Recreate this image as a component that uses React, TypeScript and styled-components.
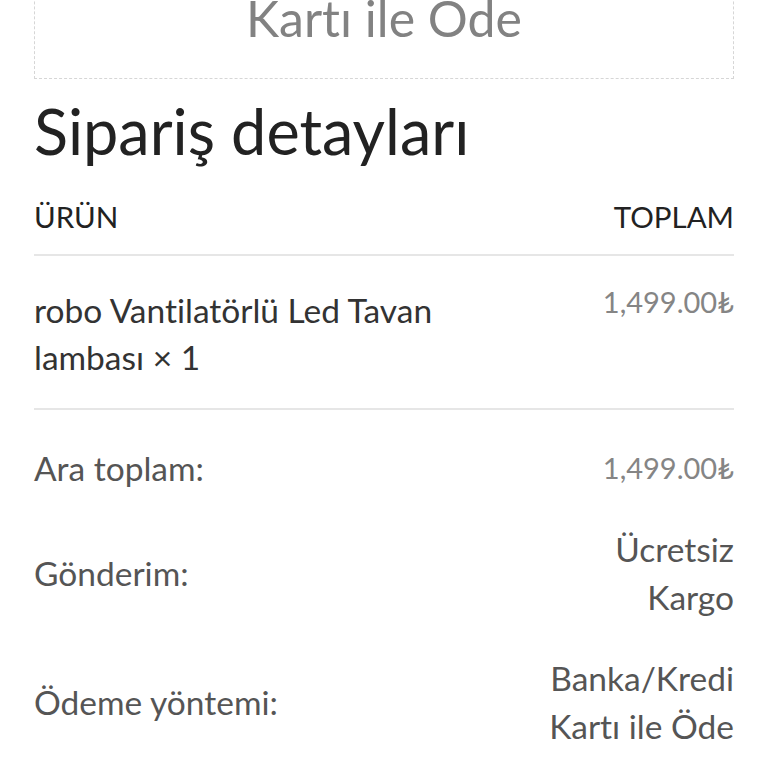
import React from 'react'
import styled, { createGlobalStyle } from 'styled-components'

const GlobalStyle = createGlobalStyle`
  html, body {
    margin: 0;
    padding: 0;
    background: #fff;
    overflow: hidden;
  }
  body {
    font-family: Lato, 'Open Sans', sans-serif;
    font-variant-ligatures: none;
    -webkit-font-smoothing: antialiased;
  }
`

const totals = [
  { label: 'Ara toplam:', value: '1,499.00₺', price: true },
  { label: 'Gönderim:', value: 'Ücretsiz Kargo', price: false },
  { label: 'Ödeme yöntemi:', value: 'Banka/Kredi Kartı ile Öde', price: false },
]

export default function App() {
  return (
    <>
      <GlobalStyle />
      <Styled.Page>
        <Styled.MethodBox>
          <Styled.MethodLine>Banka/Kredi</Styled.MethodLine>
          <Styled.MethodLine>Kartı ile Öde</Styled.MethodLine>
        </Styled.MethodBox>

        <Styled.Title>Sipariş detayları</Styled.Title>

        <Styled.HeadRow>
          <Styled.HeadCell>ÜRÜN</Styled.HeadCell>
          <Styled.HeadCell>TOPLAM</Styled.HeadCell>
        </Styled.HeadRow>

        <Styled.ProductRow>
          <Styled.ProductName>robo Vantilatörlü Led Tavan lambası × 1</Styled.ProductName>
          <Styled.Price $tight>1,499.00₺</Styled.Price>
        </Styled.ProductRow>

        <Styled.Totals>
          {totals.map((t) => (
            <Styled.TotalRow key={t.label}>
              <Styled.Label>{t.label}</Styled.Label>
              {t.price ? <Styled.Price>{t.value}</Styled.Price> : <Styled.Value>{t.value}</Styled.Value>}
            </Styled.TotalRow>
          ))}
        </Styled.Totals>
      </Styled.Page>
    </>
  )
}

const Styled = {
  Page: styled.div`
    padding: 0 34px;
    width: 700px;
  `,
  MethodBox: styled.div`
    margin-top: -93px;
    padding: 20px 0 30px;
    border: 1px dashed #d6d6d6;
    text-align: center;
  `,
  MethodLine: styled.div`
    font-size: 50px;
    line-height: 60px;
    color: #828282;
  `,
  Title: styled.h2`
    margin: 14px 0 0;
    font-size: 63px;
    font-weight: 400;
    line-height: 1.2;
    color: #222;
  `,
  HeadRow: styled.div`
    display: flex;
    justify-content: space-between;
    margin-top: 30px;
    padding-bottom: 20px;
    border-bottom: 2px solid #e6e6e6;
  `,
  HeadCell: styled.div`
    font-size: 29.5px;
    line-height: 1.2;
    color: #222;
  `,
  ProductRow: styled.div`
    display: grid;
    grid-template-columns: 1fr 190px;
    align-items: start;
    padding: 31.5px 0 26.5px;
    border-bottom: 2px solid #e6e6e6;
  `,
  ProductName: styled.div`
    font-size: 33.5px;
    line-height: 47px;
    color: #333;
    max-width: 460px;
  `,
  Price: styled.div<{ $tight?: boolean }>`
    text-align: right;
    font-size: 29px;
    line-height: ${({ $tight }) => ($tight ? '29px' : '48px')};
    color: #858585;
  `,
  Totals: styled.div`
    padding-top: 17.5px;
  `,
  TotalRow: styled.div`
    display: grid;
    grid-template-columns: 1fr 190px;
    align-items: center;
    padding: 16.5px 0;
  `,
  Label: styled.div`
    font-size: 33.5px;
    line-height: 48px;
    color: #555;
  `,
  Value: styled.div`
    text-align: right;
    font-size: 33.5px;
    line-height: 48px;
    color: #555;
  `,
}
